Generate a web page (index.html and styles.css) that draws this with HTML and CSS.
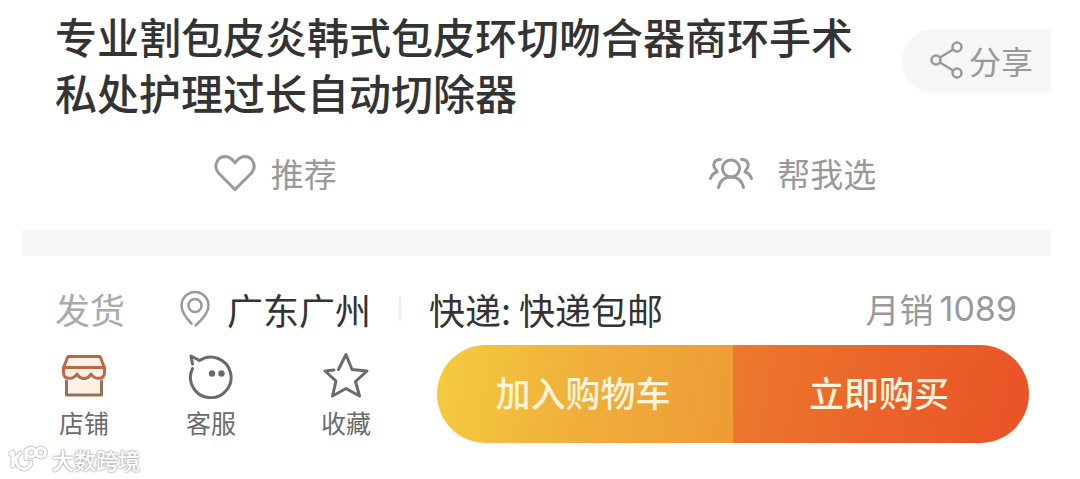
FILE: index.html
```
<!DOCTYPE html>
<html lang="zh-CN">
<head>
<meta charset="utf-8">
<meta name="viewport" content="width=device-width, initial-scale=1">
<title>商品详情</title>
<link rel="stylesheet" href="styles.css">
</head>
<body>
<main class="product">
  <header class="heading">
    <h1 class="title">专业割包皮炎韩式包皮环切吻合器商环手术私处护理过长自动切除器</h1>
    <button class="share" type="button">
      <svg class="share-icon" viewBox="0 0 34 38" aria-hidden="true"><circle cx="6" cy="19" r="4.5"/><circle cx="27" cy="6" r="4.5"/><circle cx="27" cy="32" r="4.5"/><path d="M10 16.5 23 8.5M10 21.5 23 29.5"/></svg>
      <span>分享</span>
    </button>
  </header>

  <div class="actions">
    <button class="action action-like" type="button">
      <svg class="heart-icon" viewBox="0 0 42 38" aria-hidden="true"><path d="M21 35.500 4.500 19C-.5 13.500 2 3 11 2.500c5 0 8 3.500 10 6.500 2-3 5-6.500 10-6.500 9 .5 11.500 11 6.500 16.500Z"/></svg>
      <span>推荐</span>
    </button>
    <button class="action action-pick" type="button">
      <svg class="people-icon" viewBox="0 0 44 32" aria-hidden="true"><circle cx="22" cy="11.500" r="8.500"/><path d="M9.500 30.500C11 24 15.500 20 22 20s11 4 12.500 10.500M11.500 2.500C5 2 2.500 9 7.500 13.500L8 15c-3.500 1-5.500 3.500-6.500 6.500M32.500 2.500C39 2 41.500 9 36.500 13.500L36 15c3.500 1 5.500 3.500 6.500 6.500"/></svg>
      <span>帮我选</span>
    </button>
  </div>

  <section class="shipping">
    <span class="muted">发货</span>
    <svg class="pin-icon" viewBox="0 0 32 38" aria-hidden="true"><path d="M12.500 33.500C7 28 2.500 22 2.500 15.500a13.500 13.500 0 0 1 27 0C29.500 23 24 29 16.500 35.500"/><circle cx="16" cy="15.500" r="6.500"/></svg>
    <span class="origin">广东广州</span>
    <span class="express">快递: 快递包邮</span>
    <span class="sales">月销<span class="count">1089</span></span>
  </section>

  <footer class="bar">
    <nav class="links">
      <a class="link" href="#shop">
        <svg class="link-icon shop-icon" viewBox="0 0 46 46" aria-hidden="true"><path class="awning" d="M7 3.500h32l4.500 11v5c0 7-9 8-13.500 1.500-3 6-11 6-14 0C11.500 27.500 2.500 26.500 2.500 19.500v-5ZM3 14.500h40"/><path class="wall" d="M5.500 28v14h35V28"/></svg>
        <span>店铺</span>
      </a>
      <a class="link" href="#service">
        <svg class="link-icon" viewBox="0 0 46 46" aria-hidden="true"><path d="M4.500 15.500A20.300 20.300 0 1 0 11.500 7.500L3 3l1.500 8"/><circle class="eye" cx="24" cy="20.500" r="3.200"/><circle class="eye" cx="33.500" cy="20.500" r="3.200"/></svg>
        <span>客服</span>
      </a>
      <a class="link link-last" href="#favorite">
        <svg class="link-icon" viewBox="0 0 46 46" aria-hidden="true"><path d="M15.500 16.500 23 1.500l6 15 15 1.500-11.500 10.500L36.500 43 23 35.500 9.500 43l3.500-15L2 18l9-1"/></svg>
        <span>收藏</span>
      </a>
    </nav>
    <div class="buy-group">
      <button class="buy cart" type="button">加入购物车</button>
      <button class="buy now" type="button">立即购买</button>
    </div>
  </footer>
</main>
<div class="watermark">
  <svg class="watermark-icon" viewBox="0 0 40 28" aria-hidden="true"><g class="halo"><path d="M2 9 5 7v14M12 8 7 14M8 15c1 12 15 11 15 2M18 14V5"/><circle cx="23" cy="7.500" r="4.500"/><circle cx="33" cy="7.500" r="4.500"/></g><g class="mark"><path d="M2 9 5 7v14M12 8 7 14M8 15c1 12 15 11 15 2M18 14V5"/><circle cx="23" cy="7.500" r="4.500"/><circle cx="33" cy="7.500" r="4.500"/></g></svg>
  <span>大数跨境</span>
</div>
</body>
</html>
```
FILE: styles.css
```
* {
  box-sizing: border-box;
}

body {
  margin: 0;
  background: #fff;
  color: #333;
  font-family: "Noto Sans CJK SC", sans-serif;
}

button {
  border: 0;
  padding: 0;
  background: none;
  font: inherit;
  color: inherit;
  cursor: pointer;
}

svg {
  flex: none;
  fill: none;
  stroke: currentColor;
  stroke-width: 2.5;
  stroke-linecap: round;
  stroke-linejoin: round;
}

.product {
  padding: 8px 29px 0 22px;
}

.heading {
  display: flex;
  align-items: flex-start;
  justify-content: space-between;
  padding-left: 33px;
}

.title {
  max-width: 820px;
  margin: 0;
  font-size: 42px;
  font-weight: 500;
  line-height: 56px;
}

.share {
  display: flex;
  align-items: center;
  gap: 5px;
  flex: none;
  height: 64px;
  margin-top: 21px;
  padding: 0 18px 2px 28px;
  border-radius: 32px 0 0 32px;
  background: #f6f6f6;
  color: #999;
  font-size: 32px;
  line-height: 48px;
}

.share-icon {
  width: 34px;
  height: 38px;
}

.actions {
  display: grid;
  grid-template-columns: 1fr 1fr;
  padding: 28px 0 32px;
  border-bottom: 26px solid #f7f7f7;
}

.action {
  display: flex;
  align-items: center;
  justify-content: center;
  color: #999;
  font-size: 33px;
  line-height: 50px;
}

.action-like {
  gap: 15px;
  padding-right: 8px;
}

.action-pick {
  gap: 24px;
  padding-right: 2px;
}

.heart-icon {
  width: 42px;
  height: 38px;
  stroke-width: 3;
}

.people-icon {
  width: 44px;
  height: 32px;
  stroke-width: 3;
}

.shipping {
  display: flex;
  align-items: center;
  padding: 26px 34px 0 33px;
  font-size: 36px;
  line-height: 54px;
}

.muted {
  color: #aaa;
  font-size: 35px;
}

.pin-icon {
  width: 32px;
  height: 38px;
  margin: 0 16px 0 54px;
  color: #999;
}

.origin {
  padding-right: 30px;
  background: linear-gradient(#eee, #eee) right center / 2px 24px no-repeat;
}

.express {
  padding-left: 28px;
}

.sales {
  display: flex;
  align-items: center;
  gap: 6px;
  margin-left: auto;
  color: #999;
  font-size: 34px;
}

.count {
  font-family: Inter, sans-serif;
  font-size: 34px;
}

.bar {
  display: flex;
  padding: 9px 22px 0 37px;
}

.links {
  display: flex;
  flex: none;
  gap: 77px;
  margin-right: 66px;
  padding-top: 8px;
}

.link {
  display: flex;
  flex-direction: column;
  align-items: center;
  gap: 4px;
  color: #6b6b6b;
  font-size: 25px;
  line-height: 38px;
  text-decoration: none;
}

.link-last {
  margin-left: 8px;
}

.link-icon {
  width: 46px;
  height: 46px;
  stroke-width: 3;
}

.eye {
  fill: currentColor;
  stroke: none;
}

.awning {
  stroke: #bd6846;
}

.wall {
  stroke: #9b7057;
}

.shop-icon {
  fill: #fff1e4;
}

.buy-group {
  display: flex;
  flex: 1;
  height: 98px;
  overflow: hidden;
  border-radius: 49px;
}

.buy {
  flex: 1;
  padding: 0 4px 6px 0;
  color: #fff3d8;
  font-size: 35px;
  font-weight: 500;
}

.cart {
  background: linear-gradient(100deg, #f4cc3f, #f0ae3b 50%, #ee9b35);
}

.now {
  background: linear-gradient(100deg, #ed792d, #ea642a 50%, #e95226);
}

.watermark {
  position: absolute;
  top: 442px;
  left: 8px;
  display: flex;
  align-items: center;
  gap: 4px;
  color: #fff;
  font-size: 22px;
  font-weight: 500;
  line-height: 34px;
  text-shadow: 0 0 2px #aaa, 0 0 2px #bbb, 0 0 3px #bbb;
}

.watermark-icon {
  width: 40px;
  height: 28px;
}

.halo {
  stroke: #ccc;
  stroke-width: 5;
}

.mark {
  stroke: #fff;
  stroke-width: 3;
}
```
